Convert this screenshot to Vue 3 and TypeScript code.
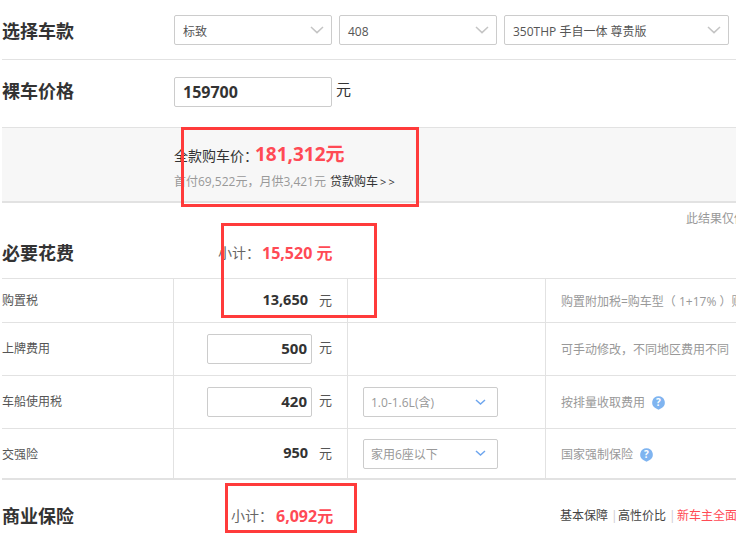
<script setup lang="ts">
interface Row {
  name: string
  value: string
  editable: boolean
  option: string
  hint: string
  help: boolean
  height: number
}
const selects = [
  { text: '标致', cls: 'sel-a' },
  { text: '408', cls: 'sel-a' },
  { text: '350THP 手自一体 尊贵版', cls: 'sel-b' },
]
const rows: Row[] = [
  { name: '购置税', value: '13,650', editable: false, option: '', hint: '购置附加税=购车型（ 1+17% ）购置税率', help: false, height: 44 },
  { name: '上牌费用', value: '500', editable: true, option: '', hint: '可手动修改，不同地区费用不同', help: false, height: 53 },
  { name: '车船使用税', value: '420', editable: true, option: '1.0-1.6L(含)', hint: '按排量收取费用', help: true, height: 53 },
  { name: '交强险', value: '950', editable: false, option: '家用6座以下', hint: '国家强制保险', help: true, height: 51 },
]
</script>

<template>
  <div class="page">
    <section class="pick">
      <h2 class="title">选择车款</h2>
      <div class="pick-list">
        <div v-for="s in selects" :key="s.text" class="select" :class="s.cls">
          <span class="sel-text">{{ s.text }}</span>
          <svg class="chev" width="14" height="8" viewBox="0 0 14 8"><path d="M1 1l6 5.6L13 1" fill="none" stroke="#c4c4c4" stroke-width="1.5" /></svg>
        </div>
      </div>
    </section>

    <section class="price">
      <h2 class="title">裸车价格</h2>
      <div class="price-box">159700</div>
      <span class="price-unit">元</span>
    </section>

    <section class="summary">
      <p class="sum-main">全款购车价：<strong>181,312元</strong></p>
      <p class="sum-sub">首付69,522元，月供3,421元 <a>贷款购车<span class="more">&gt;&gt;</span></a></p>
    </section>

    <p class="note">此结果仅供参考，实际费用以当地为准</p>

    <section class="head">
      <h2 class="title">必要花费</h2>
      <div class="subtotal"><span>小计：</span><strong>15,520 元</strong></div>
    </section>

    <div class="table">
      <div v-for="r in rows" :key="r.name" class="row" :style="{ height: r.height + 'px' }">
        <div class="cell c-name">{{ r.name }}</div>
        <div class="cell c-val">
          <div v-if="r.editable" class="num-box">{{ r.value }}</div>
          <b v-else class="num">{{ r.value }}</b>
          <span class="unit">元</span>
        </div>
        <div class="cell c-opt">
          <div v-if="r.option" class="opt">
            <span>{{ r.option }}</span>
            <svg width="11" height="7" viewBox="0 0 11 7"><path d="M1 1l4.5 4L10 1" fill="none" stroke="#6ea6ee" stroke-width="1.5" /></svg>
          </div>
        </div>
        <div class="cell c-hint">
          <span>{{ r.hint }}</span>
          <svg v-if="r.help" class="help" width="13" height="14" viewBox="0 0 13 14">
            <path d="M6.5 0.2a6.3 6.3 0 0 1 3.2 11.7L6.5 13.8 3.3 11.9A6.3 6.3 0 0 1 6.5 0.2z" fill="#7fb4f0" />
            <text x="6.5" y="10" text-anchor="middle" class="q">?</text>
          </svg>
        </div>
      </div>
    </div>

    <section class="head head-b">
      <h2 class="title">商业保险</h2>
      <div class="subtotal sub-b"><span>小计：</span><strong>6,092元</strong></div>
      <div class="plans">
        <span>基本保障</span><i>|</i><span>高性价比</span><i>|</i><span class="hot">新车主全面保障</span>
      </div>
    </section>

    <div class="mark mark-1"></div>
    <div class="mark mark-2"></div>
    <div class="mark mark-3"></div>
  </div>
</template>

<style scoped>
.page {
  position: relative;
  width: 736px;
  height: 536px;
  overflow: hidden;
  background: #fff;
  padding-left: 2px;
  box-sizing: border-box;
  font-family: "Open Sans", "Noto Sans CJK SC", sans-serif;
  font-size: 12px;
  color: #333;
  white-space: nowrap;
}
h2, p { margin: 0; }
.title {
  width: 172px;
  flex: none;
  font-size: 18px;
  line-height: 26px;
  font-weight: 700;
  color: #333;
}
.pick {
  display: flex;
  height: 60px;
  box-sizing: border-box;
  padding-top: 15px;
  border-bottom: 1px solid #e2e2e2;
  width: 734px;
}
.pick .title { margin-top: 3px; }
.pick-list { display: flex; gap: 7px; }
.select {
  display: flex;
  align-items: center;
  justify-content: space-between;
  height: 30px;
  box-sizing: border-box;
  border: 1px solid #ccc;
  border-radius: 2px;
  padding: 0 7px 0 8px;
  color: #555;
}
.sel-text { padding-top: 2px; }
.sel-a { width: 158px; }
.sel-b { width: 225px; }
.chev { flex: none; }
.price {
  display: flex;
  align-items: flex-start;
  height: 67px;
  box-sizing: border-box;
  padding-top: 17px;
}
.price .title { margin-top: 1px; }
.price-box {
  width: 158px;
  height: 30px;
  box-sizing: border-box;
  border: 1px solid #ccc;
  border-radius: 2px;
  padding-left: 8px;
  font-size: 16px;
  line-height: 28px;
  font-weight: 700;
}
.price-unit { font-size: 15px; line-height: 24px; margin-left: 4px; }
.summary {
  height: 76px;
  box-sizing: border-box;
  width: 734px;
  background: #f7f7f7;
  border-top: 1px solid #e2e2e2;
  border-bottom: 2px solid #e2e2e2;
  padding: 13px 0 0 172px;
}
.sum-main { font-size: 14px; line-height: 28px; margin-top: -1px; }
.sum-main strong { font-size: 19px; color: #ff4a55; margin-left: -3px; }
.sum-sub { font-size: 12px; line-height: 22px; margin-top: 1px; color: #999; }
.sum-sub a { color: #333; margin-left: 1px; }
.more { letter-spacing: 2px; margin-left: 2px; font-size: 11px; }
.note {
  padding-left: 684px;
  padding-top: 1px;
  box-sizing: border-box;
  height: 30px;
  line-height: 30px;
  color: #999;
  font-size: 12px;
}
.head {
  display: flex;
  align-items: center;
  height: 45px;
  box-sizing: border-box;
  padding-bottom: 5px;
}
.subtotal {
  display: flex;
  font-size: 14px;
  color: #666;
  padding-left: 44px;
  gap: 2px;
  line-height: 20px;
}
.subtotal strong { font-size: 16px; color: #ff4a55; }
.table { width: 734px; border-top: 1px solid #e2e2e2; }
.row {
  display: grid;
  grid-template-columns: 172px 174px 198px 1fr;
  box-sizing: border-box;
  border-bottom: 1px solid #e2e2e2;
}
.row:last-child { border-bottom-width: 2px; }
.cell { display: flex; align-items: center; }
.c-name { border-right: 1px solid #e2e2e2; color: #555; padding-bottom: 2px; box-sizing: border-box; }
.row:last-child .c-name { padding-bottom: 0; }
.c-val {
  justify-content: flex-end;
  border-right: 1px solid #e2e2e2;
  padding-right: 15px;
}
.c-opt { border-right: 1px solid #e2e2e2; padding-left: 15px; }
.c-hint { padding-left: 15px; color: #999; gap: 7px; }
.num { font-size: 14.5px; color: #333; margin-bottom: 3px; }
.num-box {
  width: 105px;
  height: 30px;
  box-sizing: border-box;
  border: 1px solid #ccc;
  border-radius: 2px;
  text-align: right;
  padding-right: 4px;
  font-size: 15px;
  font-weight: 700;
  line-height: 26px;
  margin-right: -4px;
}
.unit { width: 13px; margin-left: 11px; color: #555; font-size: 13px; margin-bottom: 2px; }
.num-box + .unit { margin-bottom: 5px; }
.opt {
  display: flex;
  align-items: center;
  justify-content: space-between;
  width: 135px;
  height: 30px;
  box-sizing: border-box;
  border: 1px solid #ccc;
  border-radius: 2px;
  padding: 0 11px 0 7px;
  color: #999;
}
.help { flex: none; margin-top: 2px; }
.q { font-size: 10px; font-weight: 700; fill: #fff; }
.head-b { height: 56px; padding: 15px 0 0; }
.sub-b { padding-left: 57px; gap: 3px; }
.plans {
  position: absolute;
  left: 560px;
  top: 507px;
  display: flex;
  gap: 3px;
  color: #444;
  line-height: 18px;
}
.plans i { font-style: normal; color: #ccc; width: 4px; }
.hot { color: #ff4a55; margin-left: 1px; }
.mark { position: absolute; border: 3px solid #ff3b3b; box-sizing: border-box; }
.mark-1 { left: 181px; top: 127px; width: 238px; height: 80px; }
.mark-2 { left: 221px; top: 223px; width: 156px; height: 95px; }
.mark-3 { left: 225px; top: 483px; width: 132px; height: 50px; }
</style>
